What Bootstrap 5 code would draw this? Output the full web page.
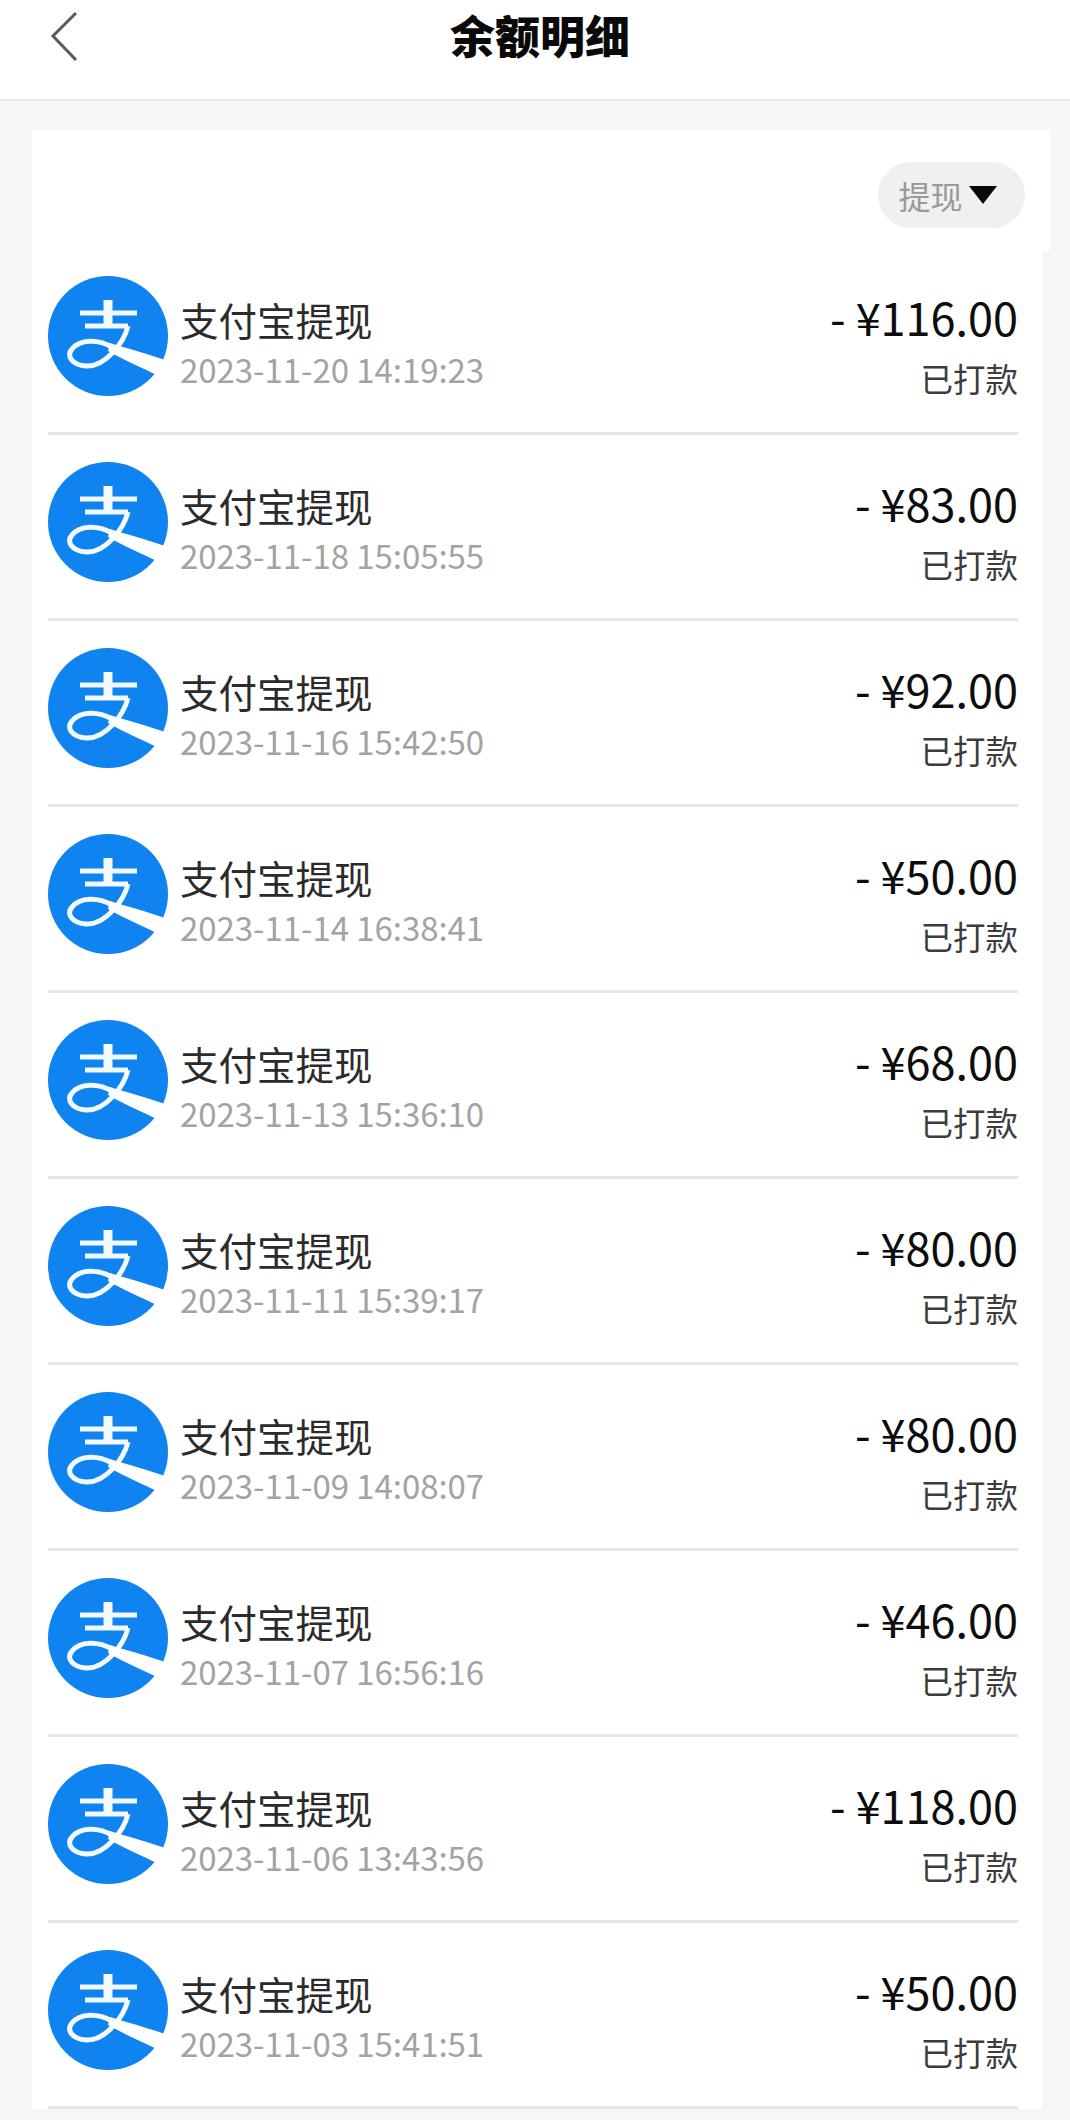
<!DOCTYPE html>
<html lang="zh">

<head>
  <meta charset="utf-8">
  <meta name="viewport" content="width=device-width, initial-scale=1">
  <link href="https://cdn.jsdelivr.net/npm/bootstrap@5.3.3/dist/css/bootstrap.min.css" rel="stylesheet">
  <title>余额明细</title>
  <style>
    html, body {
      height: 2120px;
      overflow: hidden;
    }

    body {
      background: #f6f6f6;
      font-family: "Noto Sans CJK SC", "Noto Sans", sans-serif;
    }

    .top-bar {
      height: 101px;
      background: #fff;
      border-bottom: 2px solid #e9e9e9;
      padding: 0 0 29px 10px;
    }

    .top-bar svg {
      position: absolute;
      left: 50px;
      top: 11px;
    }

    .top-title {
      font-size: 45px;
      font-weight: 900;
      color: #0a0a0a;
      line-height: 66px;
      margin: 0;
    }

    .bill-head {
      margin: 29px 20px 0 32px;
      height: 121px;
      background: #fff;
      padding: 32px 25px 0 0;
    }

    .bill-filter {
      width: 147px;
      height: 66px;
      border-radius: 33px;
      background: #f0f0f0;
      color: #999;
      font-size: 32px;
      gap: 6px;
      padding-right: 8px;
    }

    .bill-list {
      margin: 0 28px 0 32px;
      background: #fff;
      padding: 0 24px 0 16px;
    }

    .bill-row {
      height: 186px;
      border-bottom: 3px solid #e6e6e6;
      padding-top: 27px;
    }

    .bill-row:first-child {
      height: 184px;
      padding-top: 25px;
    }

    .bill-logo {
      width: 120px;
      height: 120px;
      flex: none;
      margin-right: 12px;
    }

    .bill-name {
      font-size: 38.5px;
      line-height: 50px;
      color: #2b2b2b;
      margin-top: 18px;
    }

    .bill-date {
      font-size: 33px;
      line-height: 50px;
      color: #a3a3a3;
      letter-spacing: -0.05px;
    }

    .bill-amount {
      font-size: 45px;
      line-height: 60px;
      color: #0d0d0d;
      margin-top: 11px;
    }

    .bill-state {
      font-size: 32.5px;
      line-height: 50px;
      color: #3c3c3c;
      margin-top: 6px;
    }
  </style>
</head>

<body>
  <svg width="0" height="0" class="position-absolute">
    <symbol id="alipay" viewBox="0 0 120 120">
      <circle cx="60" cy="60" r="60" fill="#0f83f0" />
      <g fill="none" stroke="#f2f9ff" stroke-width="5">
        <path d="M32 37H89" />
        <path d="M37 50H80" />
        <path d="M60 24V50" stroke-width="9" />
        <path d="M80 50C76 66 58 91 38 90C24 89 18 80 24 73C32 63 50 63 64 71" />
      </g>
      <path d="M62 67C78 72 100 78 120 85L111 100C92 91 76 84 60 75Z" fill="#fff" />
    </symbol>
  </svg>

  <!-- header -->
  <div class="top-bar position-relative d-flex justify-content-center align-items-center">
    <svg width="30" height="50" viewBox="0 0 30 50">
      <path d="M26 2L3 25L26 49" fill="none" stroke="#5a5a5a" stroke-width="3" />
    </svg>
    <h1 class="top-title">余额明细</h1>
  </div>

  <!-- filter -->
  <div class="bill-head d-flex justify-content-end align-items-start">
    <div class="bill-filter d-flex justify-content-center align-items-center">
      <span>提现</span>
      <svg width="28" height="20" viewBox="0 0 28 20">
        <path d="M0 1H28L14 19Z" fill="#0a0a0a" />
      </svg>
    </div>
  </div>

  <!-- records -->
  <div class="bill-list">
    <div class="bill-row d-flex">
      <svg class="bill-logo"><use href="#alipay" /></svg>
      <div class="flex-grow-1">
        <div class="bill-name">支付宝提现</div>
        <div class="bill-date">2023-11-20 14:19:23</div>
      </div>
      <div class="text-end">
        <div class="bill-amount">- ¥116.00</div>
        <div class="bill-state">已打款</div>
      </div>
    </div>
    <div class="bill-row d-flex">
      <svg class="bill-logo"><use href="#alipay" /></svg>
      <div class="flex-grow-1">
        <div class="bill-name">支付宝提现</div>
        <div class="bill-date">2023-11-18 15:05:55</div>
      </div>
      <div class="text-end">
        <div class="bill-amount">- ¥83.00</div>
        <div class="bill-state">已打款</div>
      </div>
    </div>
    <div class="bill-row d-flex">
      <svg class="bill-logo"><use href="#alipay" /></svg>
      <div class="flex-grow-1">
        <div class="bill-name">支付宝提现</div>
        <div class="bill-date">2023-11-16 15:42:50</div>
      </div>
      <div class="text-end">
        <div class="bill-amount">- ¥92.00</div>
        <div class="bill-state">已打款</div>
      </div>
    </div>
    <div class="bill-row d-flex">
      <svg class="bill-logo"><use href="#alipay" /></svg>
      <div class="flex-grow-1">
        <div class="bill-name">支付宝提现</div>
        <div class="bill-date">2023-11-14 16:38:41</div>
      </div>
      <div class="text-end">
        <div class="bill-amount">- ¥50.00</div>
        <div class="bill-state">已打款</div>
      </div>
    </div>
    <div class="bill-row d-flex">
      <svg class="bill-logo"><use href="#alipay" /></svg>
      <div class="flex-grow-1">
        <div class="bill-name">支付宝提现</div>
        <div class="bill-date">2023-11-13 15:36:10</div>
      </div>
      <div class="text-end">
        <div class="bill-amount">- ¥68.00</div>
        <div class="bill-state">已打款</div>
      </div>
    </div>
    <div class="bill-row d-flex">
      <svg class="bill-logo"><use href="#alipay" /></svg>
      <div class="flex-grow-1">
        <div class="bill-name">支付宝提现</div>
        <div class="bill-date">2023-11-11 15:39:17</div>
      </div>
      <div class="text-end">
        <div class="bill-amount">- ¥80.00</div>
        <div class="bill-state">已打款</div>
      </div>
    </div>
    <div class="bill-row d-flex">
      <svg class="bill-logo"><use href="#alipay" /></svg>
      <div class="flex-grow-1">
        <div class="bill-name">支付宝提现</div>
        <div class="bill-date">2023-11-09 14:08:07</div>
      </div>
      <div class="text-end">
        <div class="bill-amount">- ¥80.00</div>
        <div class="bill-state">已打款</div>
      </div>
    </div>
    <div class="bill-row d-flex">
      <svg class="bill-logo"><use href="#alipay" /></svg>
      <div class="flex-grow-1">
        <div class="bill-name">支付宝提现</div>
        <div class="bill-date">2023-11-07 16:56:16</div>
      </div>
      <div class="text-end">
        <div class="bill-amount">- ¥46.00</div>
        <div class="bill-state">已打款</div>
      </div>
    </div>
    <div class="bill-row d-flex">
      <svg class="bill-logo"><use href="#alipay" /></svg>
      <div class="flex-grow-1">
        <div class="bill-name">支付宝提现</div>
        <div class="bill-date">2023-11-06 13:43:56</div>
      </div>
      <div class="text-end">
        <div class="bill-amount">- ¥118.00</div>
        <div class="bill-state">已打款</div>
      </div>
    </div>
    <div class="bill-row d-flex">
      <svg class="bill-logo"><use href="#alipay" /></svg>
      <div class="flex-grow-1">
        <div class="bill-name">支付宝提现</div>
        <div class="bill-date">2023-11-03 15:41:51</div>
      </div>
      <div class="text-end">
        <div class="bill-amount">- ¥50.00</div>
        <div class="bill-state">已打款</div>
      </div>
    </div>
  </div>

  <script src="https://cdn.jsdelivr.net/npm/bootstrap@5.3.3/dist/js/bootstrap.bundle.min.js"></script>
</body>

</html>
